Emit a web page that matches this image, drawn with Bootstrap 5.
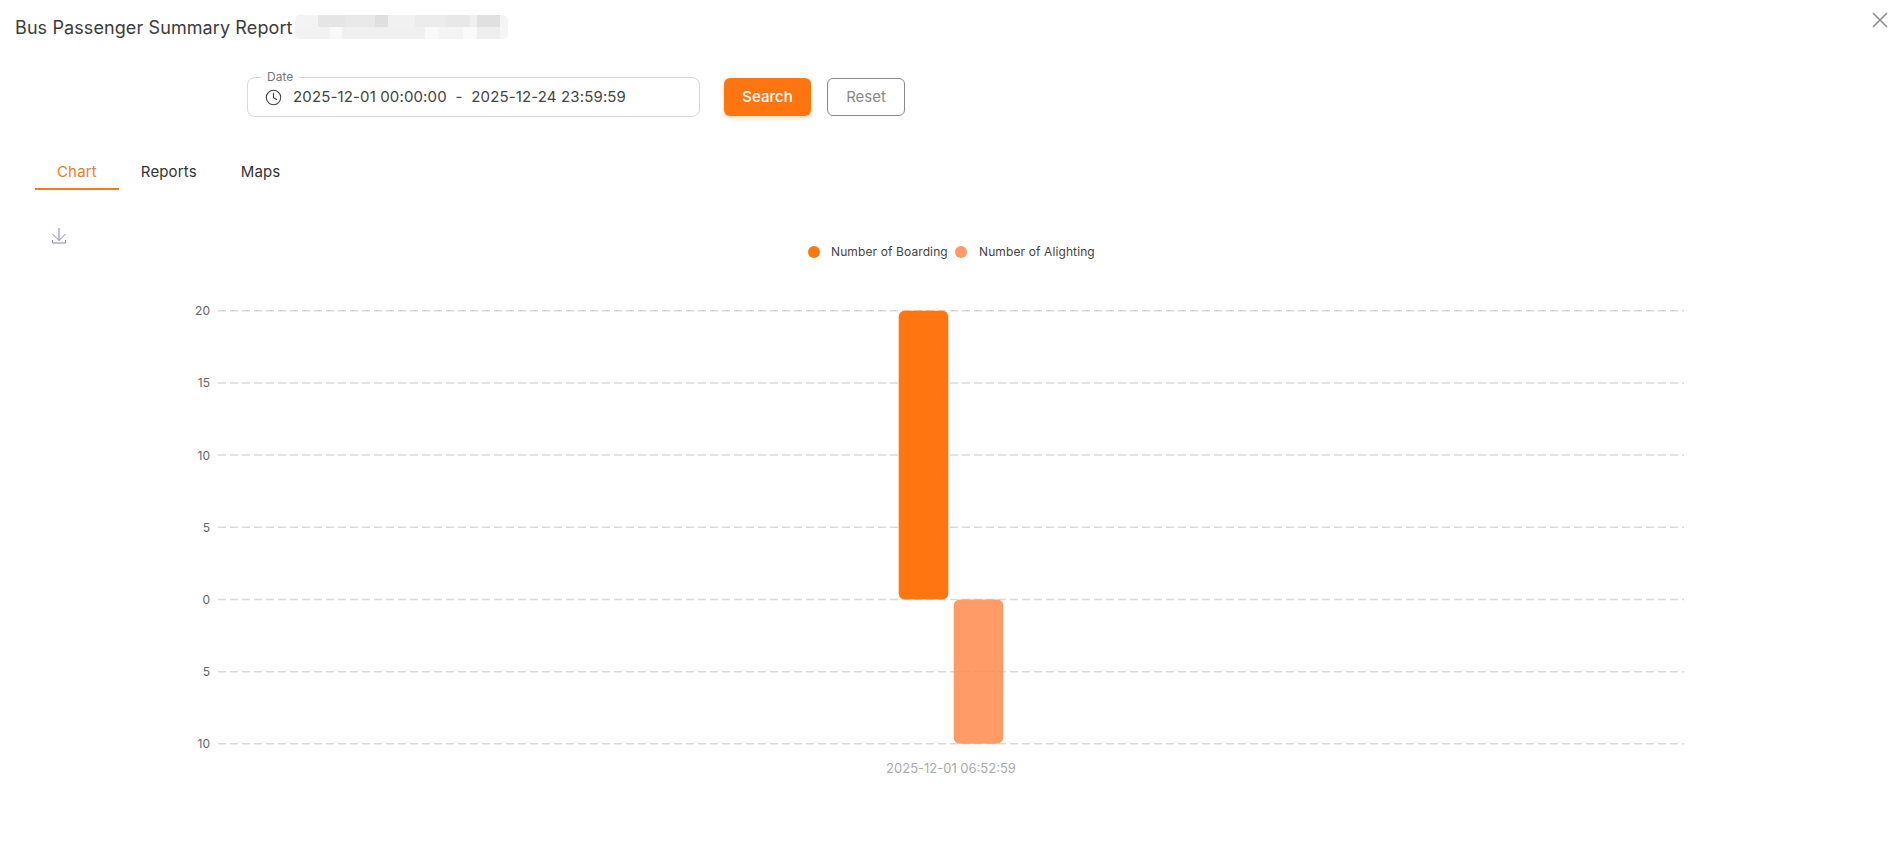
<!DOCTYPE html>
<html lang="en">
<head>
    <meta charset="UTF-8">
    <meta name="viewport" content="width=device-width, initial-scale=1.0">
    <title>Bus Passenger Summary Report</title>
    <link href="https://cdn.jsdelivr.net/npm/bootstrap@5.3.0/dist/css/bootstrap.min.css" rel="stylesheet">
    <style>
        body {
            background-color: #fff;
            color: #333;
            font-family: Inter, "Liberation Sans", sans-serif;
            height: 862px;
            overflow: hidden;
        }

        .report-head {
            height: 54px;
            padding: 15px 15px 0 15px;
        }

        .report-title {
            font-size: 18px;
            font-weight: 400;
            line-height: 24px;
            letter-spacing: 0.1px;
            margin: 1px 0 0 0;
            color: #3c3c3c;
        }

        /* blurred-out plate number, two rows of pixelated blocks */
        .plate-blur {
            width: 213px;
            height: 24px;
            margin-left: 2px;
            border-radius: 5px;
            filter: blur(0.7px);
            background-repeat: no-repeat;
            background-size: 100% 50%;
            background-position: 0 0, 0 100%;
            background-image:
                linear-gradient(90deg, #f3f3f3 23px, #e5e5e5 23px, #e5e5e5 50px, #e9e9e9 50px, #e9e9e9 80px, #dfdfdf 80px, #dfdfdf 93px, #f1f1f1 93px, #f1f1f1 120px, #ececec 120px, #ececec 150px, #e8e8e8 150px, #e8e8e8 175px, #f0f0f0 175px, #f0f0f0 182px, #e0e0e0 182px, #e0e0e0 205px, #f4f4f4 205px),
                linear-gradient(90deg, #f2f2f2 35px, #f9f9f9 35px, #f9f9f9 47px, #f0f0f0 47px, #f0f0f0 130px, #f9f9f9 130px, #f9f9f9 143px, #f4f4f4 143px, #f4f4f4 168px, #fafafa 168px, #fafafa 182px, #eeeeee 182px, #eeeeee 205px, #f5f5f5 205px);
        }

        .close-btn {
            position: absolute;
            top: 11px;
            right: 14px;
            width: 18px;
            height: 18px;
            padding: 0;
            border: 0;
            background: none;
            line-height: 0;
        }

        .filter-row {
            padding: 23px 0 0 247px;
        }

        .date-field {
            position: relative;
            width: 453px;
            height: 40px;
            border: 1px solid #d9d9d9;
            border-radius: 8px;
            padding-left: 17px;
            font-size: 15px;
            color: #444;
        }

        .date-legend {
            position: absolute;
            top: -8px;
            left: 13px;
            padding: 0 6px;
            font-size: 12px;
            line-height: 14px;
            color: #777;
            background: #fff;
        }

        .date-text {
            margin-left: 11px;
            letter-spacing: 0.14px;
            white-space: pre;
        }

        .btn-search, .btn-search:hover {
            width: 87px;
            height: 38px;
            margin-left: 24px;
            background-color: #ff7610;
            border: 0;
            border-radius: 6px;
            color: #fff;
            font-size: 15px;
            font-weight: 500;
            box-shadow: 0 2px 4px rgba(255, 118, 16, 0.3);
        }

        .btn-reset, .btn-reset:hover {
            width: 78px;
            height: 38px;
            margin-left: 16px;
            background: #fff;
            border: 1px solid #888;
            border-radius: 6px;
            color: #888;
            font-size: 15px;
        }

        .report-tabs {
            margin: 34px 0 0 35px;
            gap: 22px;
        }

        .report-tabs .nav-link {
            height: 39px;
            padding: 9px 22px 0 22px;
            color: #333;
            font-size: 15px;
            line-height: 24px;
            letter-spacing: 0.15px;
            border-bottom: 2px solid transparent;
        }

        .report-tabs .nav-link.active {
            color: #f47b20;
            border-bottom-color: #f47b20;
        }

        .report-tabs .nav-item + .nav-item .nav-link {
            padding-left: 0;
            padding-right: 22px;
        }

        .chart-wrap {
            position: relative;
            height: 600px;
            margin-top: 20px;
        }

        .download-btn {
            position: absolute;
            top: 17px;
            left: 51px;
            padding: 0;
            border: 0;
            background: none;
            line-height: 0;
        }

        .chart-svg {
            display: block;
            font-family: Inter, "Liberation Sans", sans-serif;
        }

        .grid-line {
            stroke: #d9d9d9;
            stroke-width: 1.5;
            stroke-dasharray: 8 4;
        }

        .axis-label {
            font-size: 12px;
            fill: #666;
            text-anchor: end;
        }

        .legend-label {
            font-size: 12px;
            letter-spacing: 0.11px;
            fill: #444;
        }

        .time-label {
            font-size: 13px;
            fill: #aaa;
            text-anchor: middle;
        }
    </style>
</head>
<body>
    <div class="report-head d-flex align-items-start">
        <h1 class="report-title">Bus Passenger Summary Report</h1>
        <div class="plate-blur"></div>
    </div>
    <button type="button" class="close-btn" aria-label="Close">
        <svg width="18" height="18" viewBox="0 0 18 18"><path d="M2 2 16 16M16 2 2 16" stroke="#8c8c8c" stroke-width="1.5" fill="none"/></svg>
    </button>

    <div class="filter-row d-flex align-items-center">
        <div class="date-field d-flex align-items-center">
            <span class="date-legend">Date</span>
            <svg width="17" height="17" viewBox="0 0 17 17"><circle cx="8.5" cy="8.5" r="7.2" stroke="#444" stroke-width="1.1" fill="none"/><path d="M8.5 3.8V8.8L12 10.8" stroke="#444" stroke-width="1.1" fill="none"/></svg>
            <span class="date-text">2025-12-01 00:00:00  -  2025-12-24 23:59:59</span>
        </div>
        <button type="button" class="btn btn-search">Search</button>
        <button type="button" class="btn btn-reset">Reset</button>
    </div>

    <ul class="nav report-tabs">
        <li class="nav-item"><a class="nav-link active" href="#">Chart</a></li>
        <li class="nav-item"><a class="nav-link" href="#">Reports</a></li>
        <li class="nav-item"><a class="nav-link" href="#">Maps</a></li>
    </ul>

    <div class="chart-wrap">
        <svg class="chart-svg" id="chart" width="1903" height="600" viewBox="0 210 1903 600"></svg>
        <button type="button" class="download-btn" aria-label="Download">
            <svg width="16" height="18" viewBox="0 0 16 18"><path d="M8 1V13.5M1.5 7 8 13.5 14.5 7M1.5 13V16H14.5V13" stroke="#7f86bd" stroke-width="1" fill="none"/></svg>
        </button>
    </div>

    <script>
        // Chart data, pixel scale measured off the reference
        const svg = document.getElementById('chart');
        const ticks = [['20', 310.7], ['15', 382.9], ['10', 455], ['5', 527.3], ['0', 599.6], ['5', 671.7], ['10', 743.8]];
        let out = '';

        out += '<circle cx="814" cy="252" r="6" fill="#ff7610"/>';
        out += '<text class="legend-label" x="831" y="256">Number of Boarding</text>';
        out += '<circle cx="961" cy="252" r="6" fill="#ff9a66"/>';
        out += '<text class="legend-label" x="979" y="256">Number of Alighting</text>';

        ticks.forEach(function(t) {
            out += '<line class="grid-line" x1="218" x2="1684" y1="' + t[1] + '" y2="' + t[1] + '"/>';
            out += '<text class="axis-label" x="210" y="' + (t[1] + 4.5) + '">' + t[0] + '</text>';
        });

        out += '<rect x="898.7" y="310.7" width="49.6" height="288.9" rx="6" fill="#ff7610"/>';
        out += '<rect x="953.7" y="599.6" width="49.6" height="144.2" rx="6" fill="#ff8c50" fill-opacity="0.87"/>';
        out += '<text class="time-label" x="951" y="772.5">2025-12-01 06:52:59</text>';

        svg.innerHTML = out;
    </script>
    <script src="https://cdn.jsdelivr.net/npm/bootstrap@5.3.0/dist/js/bootstrap.bundle.min.js"></script>
</body>
</html>
